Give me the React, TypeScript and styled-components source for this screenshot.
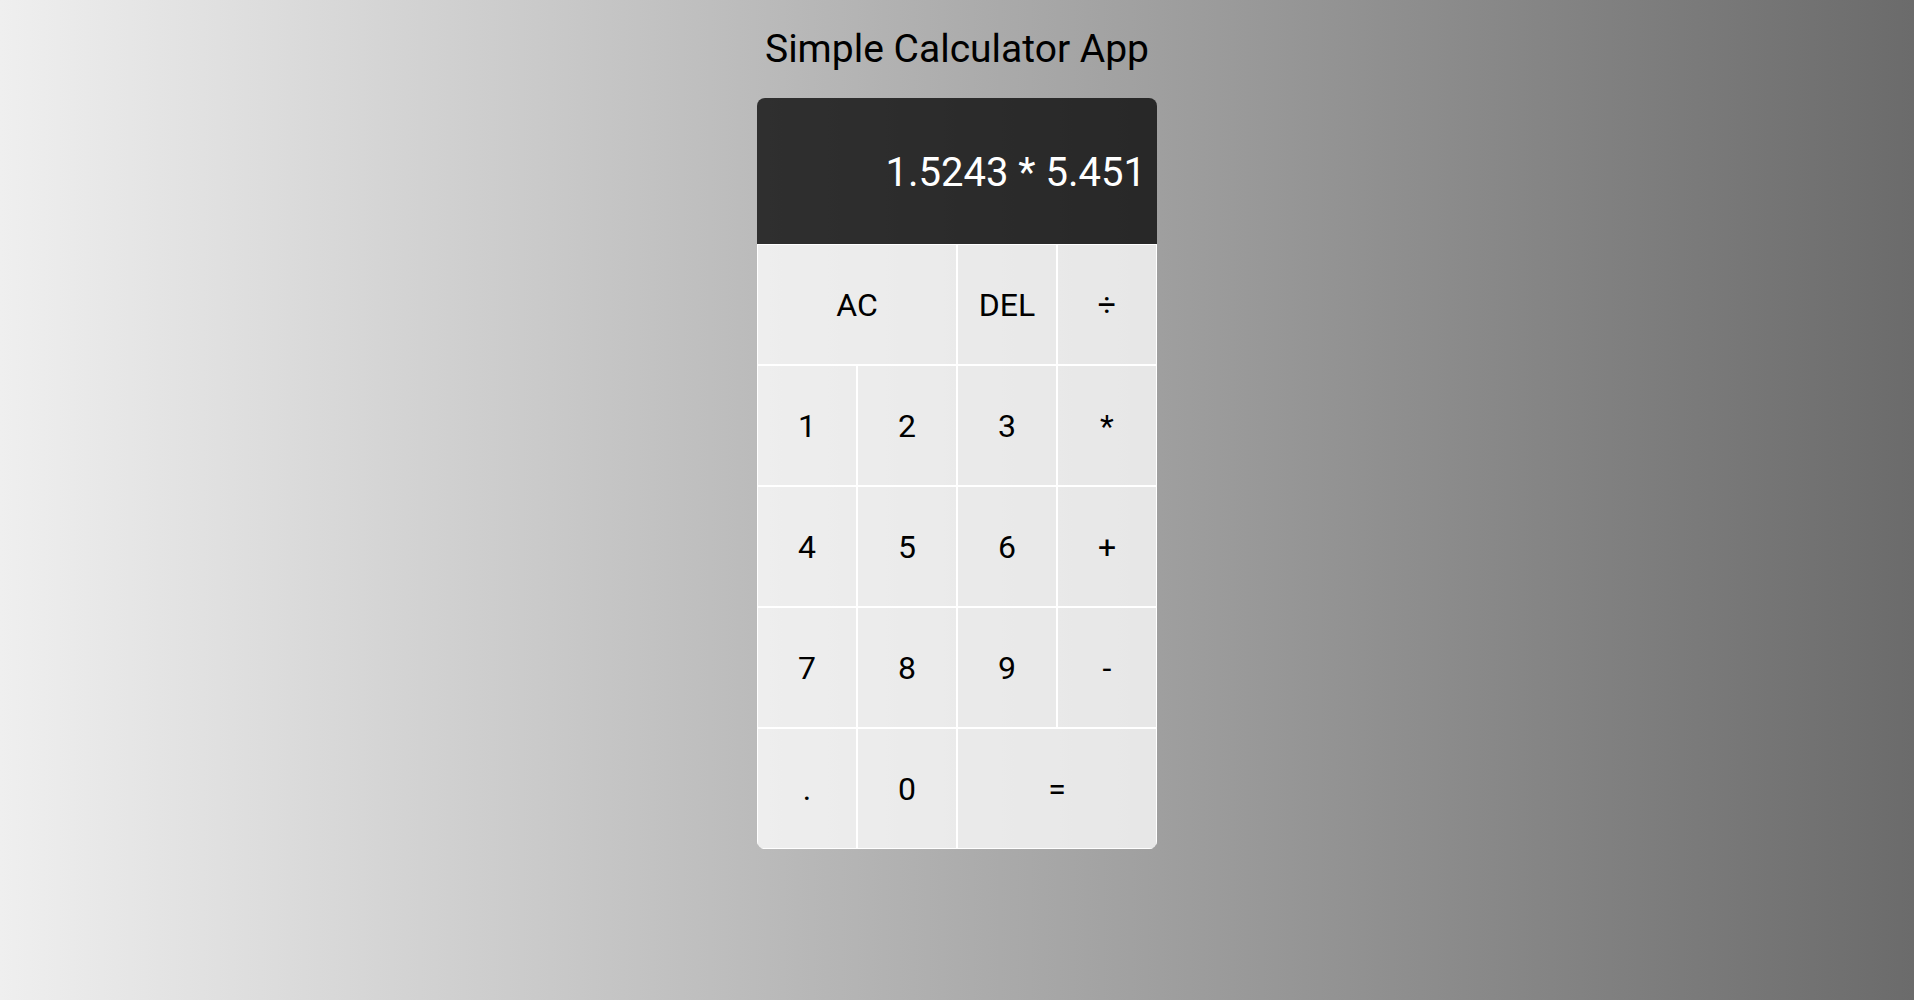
import React from "react";
import styled, { createGlobalStyle } from "styled-components";

const GlobalStyle = createGlobalStyle`
  * { box-sizing: border-box; }
  html, body { margin: 0; padding: 0; }
  body {
    font-family: Roboto, "Liberation Sans", sans-serif;
    min-height: 100vh;
    background: linear-gradient(to right, #efefef, #6b6b6b);
  }
`;

const Page = styled.main`
  min-height: 100vh;
  display: flex;
  flex-direction: column;
  align-items: center;
`;

const Title = styled.h1`
  margin: 26px 0 26px;
  font-size: 39px;
  font-weight: 400;
  line-height: normal;
  color: #000;
`;

const Calculator = styled.div`
  width: 400px;
  display: grid;
  grid-template-columns: repeat(4, 100px);
  grid-template-rows: 146px repeat(5, 121px);
  border-radius: 8px;
  overflow: hidden;
`;

const Display = styled.div`
  grid-column: 1 / -1;
  background-color: rgba(0, 0, 0, 0.75);
  display: flex;
  align-items: center;
  justify-content: flex-end;
  padding: 2px 11px 0 12px;
  color: #fff;
  font-size: 40px;
  white-space: nowrap;
`;

const Key = styled.button<{ $span?: number }>`
  grid-column: span ${(p) => p.$span ?? 1};
  border: 1px solid #fff;
  background-color: rgba(255, 255, 255, 0.75);
  font-family: Roboto, "Liberation Sans", sans-serif;
  font-size: 32px;
  color: #000;
  padding: 0;
  cursor: pointer;
  outline: none;
`;

const keys: { label: string; span?: number }[] = [
  { label: "AC", span: 2 },
  { label: "DEL" },
  { label: "÷" },
  { label: "1" },
  { label: "2" },
  { label: "3" },
  { label: "*" },
  { label: "4" },
  { label: "5" },
  { label: "6" },
  { label: "+" },
  { label: "7" },
  { label: "8" },
  { label: "9" },
  { label: "-" },
  { label: "." },
  { label: "0" },
  { label: "=", span: 2 },
];

export default function App() {
  return (
    <>
      <GlobalStyle />
      <Page>
        <Title>Simple Calculator App</Title>
        <Calculator>
          <Display>1.5243 * 5.451</Display>
          {keys.map((k) => (
            <Key key={k.label} $span={k.span}>
              {k.label}
            </Key>
          ))}
        </Calculator>
      </Page>
    </>
  );
}
